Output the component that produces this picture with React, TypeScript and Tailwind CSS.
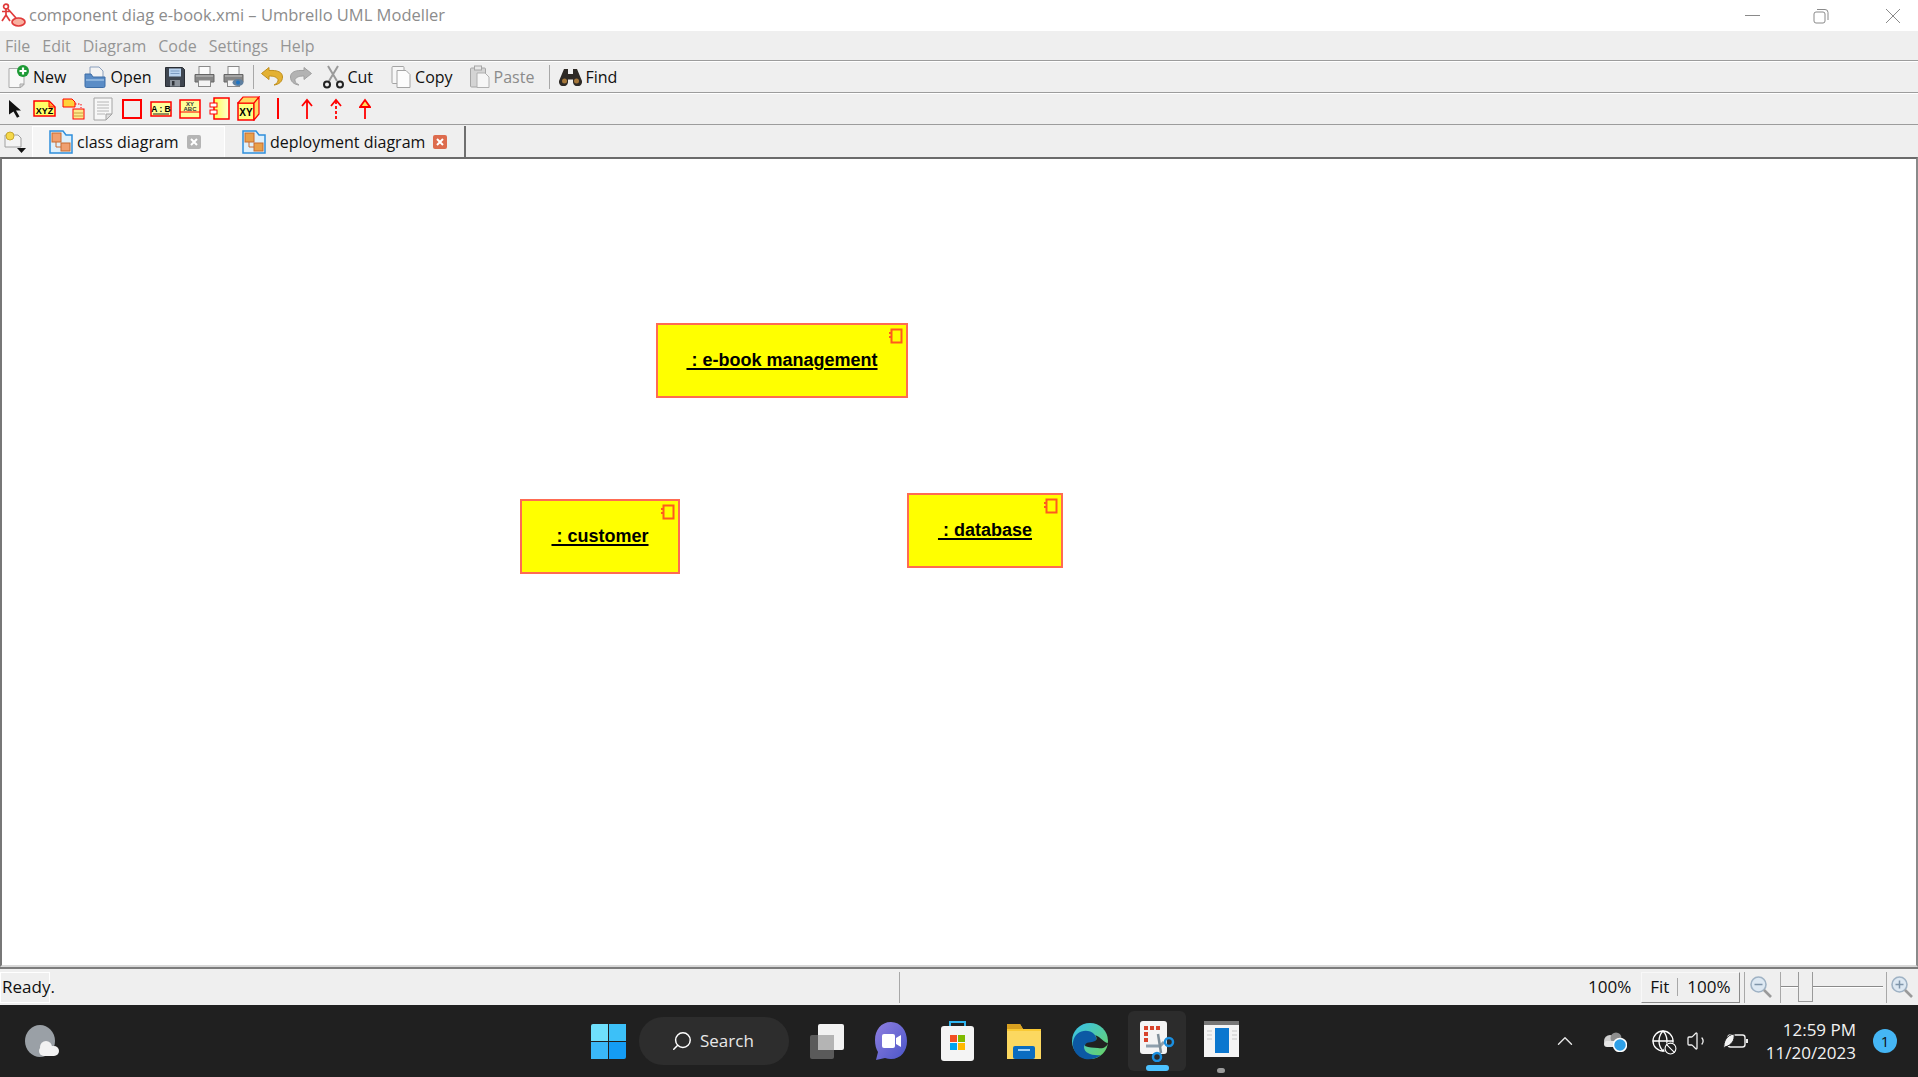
import React from 'react';
import { Search, ChevronUp, Volume1, Globe, Ban } from 'lucide-react';

const UmlBox = ({ name, className }: { name: string; className: string }) => (
  <div className={`absolute flex items-center justify-center bg-[#ffff00] border-2 border-[#ff6b52] ${className}`}>
    <span className="whitespace-pre font-['Liberation_Sans',sans-serif] font-bold text-[18px] leading-[20px] text-black underline underline-offset-2 decoration-2 mt-[-1px]">{` : ${name}`}</span>
    {/* little component marker */}
    <svg className="absolute top-[3px] right-[3px]" width="15" height="16" viewBox="0 0 15 16" fill="none" stroke="#ff5a1e" strokeWidth="2">
      <rect x="3.5" y="1.5" width="10" height="13" />
      <path d="M1 5h3M1 9h3" />
    </svg>
  </div>
);

const PageIcon = ({ plus }: { plus?: boolean }) => (
  <svg width="24" height="24" viewBox="0 0 24 24">
    <path d="M3 3.5h12l3 3v13l-3 3H3z" fill="#f8f8f8" stroke="#a9a9a9" />
    <path d="M18 19l-4 0 0 3.5z" fill="#ddd" stroke="#a9a9a9" />
    {plus && <circle cx="17" cy="6" r="6" fill="#1d9a35" />}
    {plus && <path d="M17 2.5v7M13.5 6h7" stroke="#fff" strokeWidth="2.2" />}
  </svg>
);

const OpenIcon = () => (
  <svg width="24" height="24" viewBox="0 0 24 24">
    <path d="M7 2h9l4 4v8H7z" fill="#f3f3f3" stroke="#8a9fbd" />
    <path d="M2 9h6l2 3h12v9a1.5 1.5 0 0 1-1.5 1.5h-17A1.5 1.5 0 0 1 2 21z" fill="#5a8cc6" stroke="#3d6da6" />
    <path d="M3 14h18v2H3z" fill="#8bb3dd" />
  </svg>
);

const SaveIcon = () => (
  <svg width="22" height="22" viewBox="0 0 22 22">
    <path d="M1.5 1.5h17l2 2v17h-19z" fill="#3f4650" stroke="#2a2e34" />
    <rect x="5" y="2.5" width="12" height="8" fill="#b9d2ee" />
    <path d="M6.5 5h9M6.5 7.5h9" stroke="#7d9cc2" />
    <rect x="6" y="14" width="10" height="6.5" fill="#8c939b" />
    <rect x="8" y="15" width="2.5" height="4.5" fill="#2f3338" />
  </svg>
);

const PrintIcon = ({ preview }: { preview?: boolean }) => (
  <svg width="23" height="23" viewBox="0 0 23 23">
    <rect x="6" y="1.5" width="11" height="8" fill="#fbfbfb" stroke="#8a8a8a" />
    <path d="M2 9.5h19v7.5H2z" fill="#868686" stroke="#666" />
    <path d="M3 11h17" stroke="#c6c6c6" />
    <rect x="5.5" y="15" width="12" height="6.5" fill="#f4f4f4" stroke="#8a8a8a" />
    {preview && <ellipse cx="16" cy="17.5" rx="5.5" ry="3.5" fill="#5f7f9f" />}
    {preview && <circle cx="16" cy="17.5" r="2" fill="#1f75c4" />}
  </svg>
);

const CurveArrow = ({ gold }: { gold?: boolean }) => (
  <svg width="24" height="22" viewBox="0 0 24 22">
    <path
      d="M9 1.5L1.5 7.5 9 13.5V10c5 0 7.5 1 9 3.5 .5 2-1 4-4 5.5 5-.5 8.5-3.5 8.5-8 0-5-5-7-13.5-6.5z"
      fill={gold ? '#e3b133' : '#b3b3b3'}
      stroke={gold ? '#c08f1d' : '#a0a0a0'}
    />
  </svg>
);

const ScissorsIcon = () => (
  <svg width="22" height="24" viewBox="0 0 22 24" fill="none">
    <path d="M6 1l9 15M16 1L7 16" stroke="#9a9a9a" strokeWidth="2" />
    <circle cx="5" cy="19.5" r="3" stroke="#222" strokeWidth="2" />
    <circle cx="18" cy="19.5" r="3" stroke="#222" strokeWidth="2" />
  </svg>
);

const CopyIcon = () => (
  <svg width="22" height="24" viewBox="0 0 22 24">
    <rect x="2" y="1.5" width="12" height="17" rx="1" fill="#f7f7f7" stroke="#a4a4a4" />
    <path d="M7 5.5h9l4 4v13H7z" fill="#fcfcfc" stroke="#a4a4a4" />
  </svg>
);

const PasteIcon = () => (
  <svg width="22" height="24" viewBox="0 0 22 24">
    <rect x="1.5" y="3" width="15" height="19" rx="1" fill="#d4d4d4" stroke="#a6a6a6" />
    <rect x="5.5" y="1" width="7" height="4" fill="#e8e8e8" stroke="#a6a6a6" />
    <path d="M8 8h8l4 4v10.5H8z" fill="#f6f6f6" stroke="#b0b0b0" />
  </svg>
);

const BinocularsIcon = () => (
  <svg width="23" height="18" viewBox="0 0 23 18">
    <path d="M5 1h4v5h5V1h4l5 12a4.5 4.5 0 0 1-9 1.5v-3h-5v3a4.5 4.5 0 0 1-9-1.5z" fill="#2e2a26" />
    <circle cx="5.5" cy="13" r="2.5" fill="#a5773a" />
    <circle cx="17.5" cy="13" r="2.5" fill="#a5773a" />
  </svg>
);

const Sep = ({ className }: { className: string }) => <div className={`w-px h-[24px] bg-[#a8a8a8] ${className}`} />;

const ToolBtn = ({ icon, label, gray, className }: { icon: React.ReactNode; label: string; gray?: boolean; className: string }) => (
  <div className={`flex items-center ${className}`}>
    {icon}
    <span className={`text-[16px] ml-[3px] ${gray ? 'text-[#8b8b8b]' : 'text-[#101010]'}`}>{label}</span>
  </div>
);

const NoteCorner = ({ text }: { text: string }) => (
  <svg width="23" height="17" viewBox="0 0 23 17">
    <path d="M1 1h15l6 6v9H1z" fill="#ffff66" stroke="#f00" strokeWidth="1.5" />
    <path d="M16 1l6 6h-6z" fill="#ffa030" stroke="#f00" />
    <text x="11.5" y="14" textAnchor="middle" fontFamily="Liberation Sans" fontWeight="bold" fontSize="9" fill="#000">{text}</text>
  </svg>
);

const ModeIcons = () => (
  <div className="flex items-center h-[31px]">
    <svg className="ml-[8px]" width="15" height="19" viewBox="0 0 15 19">
      <path d="M1 1l12 10.5H8l3.5 6-2.5 1.3-3.5-6.3L1 15.5z" fill="#111" />
    </svg>
    <div className="ml-[10px]"><NoteCorner text="XYZ" /></div>
    <svg className="ml-[6px]" width="23" height="22" viewBox="0 0 23 22">
      <path d="M1 1h9l3 3v5H1z" fill="#ffd23a" stroke="#f00" />
      <path d="M13 6h6v4" fill="none" stroke="#f00" strokeDasharray="1.5 1.5" />
      <rect x="11" y="11" width="11" height="10" fill="#ffe98a" stroke="#f00" />
      <path d="M12 15h9M12 18h9" stroke="#c8a040" />
    </svg>
    <svg className="ml-[8px]" width="20" height="24" viewBox="0 0 20 24">
      <path d="M1 1h18v16l-6 6H1z" fill="#f7f7f7" stroke="#a4a4a4" />
      <path d="M4 5h12M4 8h12M4 11h12M4 14h12M4 17h8" stroke="#b6b6b6" />
      <path d="M19 17h-6v6z" fill="#ddd" stroke="#a4a4a4" />
    </svg>
    <div className="ml-[9px] w-[20px] h-[20px] border-2 border-[#f00]" />
    <svg className="ml-[8px]" width="22" height="16" viewBox="0 0 22 16">
      <rect x="1" y="1" width="20" height="14" fill="#ffff99" stroke="#f00" strokeWidth="1.5" />
      <text x="11" y="11" textAnchor="middle" fontFamily="Liberation Sans" fontWeight="bold" fontSize="8.5" fill="#000">A : B</text>
      <path d="M3 13h16" stroke="#222" />
    </svg>
    <svg className="ml-[7px]" width="22" height="20" viewBox="0 0 22 20">
      <rect x="1" y="1" width="20" height="18" fill="#ffff99" stroke="#f00" strokeWidth="1.5" />
      <path d="M1 13h20" stroke="#f00" />
      <text x="11" y="7" textAnchor="middle" fontFamily="Liberation Sans" fontWeight="bold" fontSize="6" fill="#333">XY</text>
      <text x="11" y="12" textAnchor="middle" fontFamily="Liberation Sans" fontWeight="bold" fontSize="6" fill="#333">ABC</text>
    </svg>
    <svg className="ml-[8px]" width="21" height="23" viewBox="0 0 21 23">
      <defs>
        <linearGradient id="compFill" x1="0" x2="1" y1="0" y2="0">
          <stop offset="0" stopColor="#ffff55" />
          <stop offset="1" stopColor="#ffffd0" />
        </linearGradient>
      </defs>
      <rect x="5" y="1" width="15" height="21" fill="url(#compFill)" stroke="#f00" strokeWidth="1.5" />
      <rect x="1" y="6" width="7" height="4" fill="#fff" stroke="#f00" />
      <rect x="1" y="13" width="7" height="4" fill="#fff" stroke="#f00" />
    </svg>
    <svg className="ml-[7px]" width="23" height="25" viewBox="0 0 23 25">
      <path d="M1 7h16v17H1z" fill="#ffff80" stroke="#f00" strokeWidth="1.5" />
      <path d="M1 7l5-6h16l-5 6zM17 7l5-6v17l-5 6z" fill="#ffd860" stroke="#f00" strokeWidth="1.2" />
      <text x="9" y="20" textAnchor="middle" fontFamily="Liberation Sans" fontWeight="bold" fontSize="10" fill="#000">XY</text>
    </svg>
    <div className="ml-[17px] w-[2px] h-[21px] bg-[#f00]" />
    <svg className="ml-[22px]" width="12" height="22" viewBox="0 0 12 22" fill="none" stroke="#f00" strokeWidth="1.8">
      <path d="M6 21V2M1 8l5-6 5 6" />
    </svg>
    <svg className="ml-[17px]" width="12" height="22" viewBox="0 0 12 22" fill="none" stroke="#f00" strokeWidth="1.8">
      <path d="M6 21V2" strokeDasharray="3 2" />
      <path d="M1 8l5-6 5 6" />
    </svg>
    <svg className="ml-[17px]" width="12" height="22" viewBox="0 0 12 22" fill="none" stroke="#f00" strokeWidth="1.8">
      <path d="M6 21V9" />
      <path d="M1 9l5-7 5 7z" fill="#ffe060" />
    </svg>
  </div>
);

const DiagramIcon = ({ deployment }: { deployment?: boolean }) => (
  <svg width="24" height="24" viewBox="0 0 24 24">
    <path d="M1 1h13l3 4h6v18H1z" fill="#dff0fb" stroke="#2f8fdc" strokeWidth="1.5" />
    <rect x="3" y="3" width="9" height="9" fill={deployment ? '#e8a04a' : '#f0a070'} stroke="#c76b30" />
    <rect x="12" y="13" width="9" height="8" fill={deployment ? '#e8a04a' : '#f0a070'} stroke="#c76b30" />
    <path d="M7 12v5h5" fill="none" stroke="#c76b30" />
  </svg>
);

const CloseTab = ({ active }: { active?: boolean }) => (
  <div className={`w-[14px] h-[14px] rounded-[2px] flex items-center justify-center ${active ? 'bg-[#dd6b4d]' : 'bg-[#b5b5b5]'}`}>
    <svg width="8" height="8" viewBox="0 0 8 8" stroke="#fff" strokeWidth="2"><path d="M1 1l6 6M7 1L1 7" /></svg>
  </div>
);

const ZoomIcon = ({ plus }: { plus?: boolean }) => (
  <svg width="24" height="24" viewBox="0 0 24 24" fill="none">
    <circle cx="9.5" cy="9.5" r="7.5" fill="#dde8f2" stroke="#9fb2c4" strokeWidth="1.6" />
    <path d="M5.5 9.5h8" stroke="#7f95aa" strokeWidth="1.5" />
    {plus && <path d="M9.5 5.5v8" stroke="#7f95aa" strokeWidth="1.5" />}
    <path d="M15 15l7 7" stroke="#9a9a9a" strokeWidth="2.6" />
  </svg>
);

const TaskbarIcons = () => (
  <div className="flex items-center">
    {/* start */}
    <div className="ml-[591px] grid grid-cols-2 gap-[1px] w-[35px] h-[35px]">
      <div className="bg-[#6fe0fc] rounded-tl-[2px]" />
      <div className="bg-[#3cc0f8]" />
      <div className="bg-[#3ab8f8]" />
      <div className="bg-[#149cf5] rounded-br-[2px]" />
    </div>
    {/* search */}
    <div className="ml-[13px] w-[150px] h-[48px] rounded-full bg-[#2d2d2d] flex items-center pl-[32px]">
      <Search className="w-[22px] h-[22px] text-white -scale-x-100" strokeWidth={1.6} />
      <span className="ml-[7px] text-[17px] text-[#e8e8e8]">Search</span>
    </div>
    {/* task view */}
    <svg className="ml-[20px]" width="36" height="36" viewBox="0 0 36 36">
      <rect x="1" y="12" width="24" height="24" rx="2" fill="#5a5a5a" />
      <rect x="9" y="1" width="26" height="26" rx="2" fill="#f2f2f2" />
      <rect x="9" y="12" width="16" height="15" fill="#b4b4b4" />
    </svg>
    {/* chat */}
    <svg className="ml-[29px]" width="34" height="40" viewBox="0 0 34 40">
      <defs>
        <linearGradient id="chatFill" x1="0" x2="1" y1="0" y2="1">
          <stop offset="0" stopColor="#8f7fe0" />
          <stop offset="1" stopColor="#4a55c8" />
        </linearGradient>
      </defs>
      <path d="M17 1C7 1 1 9 1 19c0 5 1 9 3 12l-2 8 9-2c2 .7 4 1 6 1 10 0 16-8 16-18S27 1 17 1z" fill="url(#chatFill)" />
      <rect x="8" y="13" width="13" height="14" rx="2" fill="#fff" />
      <path d="M22 17l5-3v12l-5-3z" fill="#fff" />
    </svg>
    {/* store */}
    <svg className="ml-[32px]" width="35" height="42" viewBox="0 0 35 42">
      <path d="M10 7V2h15v5" fill="none" stroke="#2fb5f0" strokeWidth="2" />
      <rect x="1" y="6" width="33" height="35" rx="3" fill="#f4f4f4" />
      <rect x="10" y="15" width="7" height="7" fill="#f25022" />
      <rect x="18" y="15" width="7" height="7" fill="#7fba00" />
      <rect x="10" y="23" width="7" height="7" fill="#00a4ef" />
      <rect x="18" y="23" width="7" height="7" fill="#ffb900" />
    </svg>
    {/* explorer */}
    <svg className="ml-[31px]" width="36" height="38" viewBox="0 0 36 38">
      <path d="M1 2h13l3 5h18v30H1z" fill="#f9c935" />
      <path d="M1 2h13l3 5H1z" fill="#d8a020" />
      <path d="M1 9h34v28H1z" fill="#fcd860" />
      <rect x="7" y="24" width="22" height="13" rx="2" fill="#0a6cc0" />
      <rect x="12" y="27" width="12" height="2" fill="#9ed0f5" />
    </svg>
    {/* edge */}
    <svg className="ml-[30px]" width="36" height="38" viewBox="0 0 36 38">
      <defs>
        <linearGradient id="edgeFill" x1="0" x2="1" y1="0" y2="1">
          <stop offset="0" stopColor="#35c1f1" />
          <stop offset="1" stopColor="#6dd35c" />
        </linearGradient>
      </defs>
      <circle cx="18" cy="19" r="18" fill="url(#edgeFill)" />
      <path d="M1 20C3 8 16 6 22 12c3 3 3 7 0 9-4 2-10 0-10 4 0 6 8 9 17 8-5 4-11 5-16 4C5 35 0 28 1 20z" fill="#0c59a4" />
      <path d="M13 24c0-5 7-3 10-5 2-1 2-4 0-6 6 2 9 8 13 8-1 4-5 6-10 5-5-.5-9 0-13-2z" fill="#212121" />
    </svg>
    {/* snipping tool, active */}
    <div className="ml-[20px] relative w-[58px] h-[60px] rounded-[6px] bg-[#2c2c2c] flex items-center justify-center">
      <svg width="36" height="42" viewBox="0 0 36 42">
        <rect x="1" y="1" width="27" height="33" rx="3" fill="#f4f4f4" />
        <rect x="5" y="6" width="4" height="4" fill="#d8432a" />
        <rect x="11" y="6" width="4" height="4" fill="#d8432a" />
        <rect x="17" y="6" width="4" height="4" fill="#d8432a" />
        <rect x="5" y="12" width="4" height="4" fill="#d8432a" />
        <rect x="5" y="18" width="4" height="4" fill="#d8432a" />
        <path d="M7 26h14l4-4" fill="none" stroke="#8ea0ad" strokeWidth="3" />
        <path d="M19 14l3 19" stroke="#7f8f99" strokeWidth="2.5" />
        <circle cx="30" cy="22" r="4" fill="none" stroke="#1a8fe0" strokeWidth="2.5" />
        <circle cx="18" cy="37" r="4" fill="none" stroke="#1a8fe0" strokeWidth="2.5" />
      </svg>
      <div className="absolute bottom-0 left-[18px] w-[23px] h-[6px] rounded-full bg-[#4cc2ff]" />
    </div>
    {/* mini window */}
    <div className="ml-[18px] relative w-[35px] h-[40px]">
      <svg width="35" height="36" viewBox="0 0 35 36">
        <rect width="35" height="36" fill="#f4f4f4" />
        <rect width="35" height="4" fill="#777" />
        <rect x="11" y="7" width="14" height="25" fill="#0b77cf" />
        <path d="M3 10h5M3 14h5M3 18h5M28 10h5M28 14h5M28 18h5" stroke="#c8c8c8" />
      </svg>
      <div className="absolute bottom-[-12px] left-[13px] w-[8px] h-[5px] rounded-full bg-[#9a9a9a]" />
    </div>
  </div>
);

const Tray = () => (
  <div className="ml-auto flex items-center text-white">
    <ChevronUp className="w-[26px] h-[26px] text-[#e6e6e6]" strokeWidth={1.3} />
    <svg className="ml-[23px]" width="26" height="22" viewBox="0 0 26 22">
      <circle cx="9" cy="11" r="6" fill="#cfcfcf" />
      <circle cx="15" cy="8" r="5.5" fill="#8e8e8e" />
      <rect x="3" y="11" width="15" height="6" rx="3" fill="#e6e6e6" />
      <circle cx="19" cy="15" r="6.5" fill="#2e9fe6" stroke="#fff" strokeWidth="1.5" />
    </svg>
    <div className="relative ml-[24px] w-[24px] h-[24px]">
      <Globe className="w-[24px] h-[24px] text-white" strokeWidth={1.3} />
      <div className="absolute right-[-2px] bottom-[-2px] bg-[#202020] rounded-full">
        <Ban className="w-[13px] h-[13px] text-white" strokeWidth={2} />
      </div>
    </div>
    <Volume1 className="ml-[11px] w-[24px] h-[24px] text-[#f0f0f0]" strokeWidth={1.3} />
    <svg className="ml-[13px]" width="26" height="20" viewBox="0 0 26 20" fill="none">
      <rect x="5" y="4" width="17" height="12" rx="2.5" stroke="#f0f0f0" strokeWidth="1.4" />
      <path d="M23 8h2v4h-2" fill="#f0f0f0" />
      <path d="M1 18C0 10 4 4 11 3c1 6-2 11-9 13z" fill="#f4f4f4" stroke="#202020" />
    </svg>
    <div className="ml-[19px] flex flex-col items-end text-[17px] leading-[23px] text-[#f2f2f2] w-[88px]">
      <span>12:59 PM</span>
      <span>11/20/2023</span>
    </div>
    <div className="ml-[17px] mr-[21px] w-[24px] h-[24px] rounded-full bg-[#45b6f5] flex items-center justify-center text-[15px] text-[#101010]">1</div>
  </div>
);

export default function App() {
  return (
    <div className="w-[1918px] h-[1077px] overflow-hidden flex flex-col bg-[#efefef] font-['Open_Sans','Noto_Sans',sans-serif]">
      {/* title bar */}
      <div className="h-[31px] bg-white flex items-center shrink-0">
        <svg className="ml-[1px]" width="25" height="25" viewBox="0 0 25 25" fill="none" stroke="#e03a3a" strokeWidth="1.7">
          <circle cx="5" cy="3.5" r="2.4" />
          <path d="M5 6v6M1 8.5h8M5 12l-4 6M5 12l4 6M7 6l8 9" />
          <ellipse cx="17.5" cy="19" rx="6.5" ry="4" fill="#f8b0a0" />
        </svg>
        <span className="ml-[3px] text-[16.5px] text-[#8c8c8c]">component diag e-book.xmi – Umbrello UML Modeller</span>
        <div className="ml-auto flex items-center text-[#8a8a8a]">
          <div className="w-[15px] h-px bg-[#8a8a8a]" />
          <svg className="ml-[53px]" width="16" height="16" viewBox="0 0 16 16" fill="none" stroke="#8a8a8a">
            <rect x="1" y="4" width="11" height="11" rx="2" />
            <path d="M4 1.5h8a3 3 0 0 1 3 3V12" />
          </svg>
          <svg className="ml-[56px] mr-[17px]" width="16" height="16" viewBox="0 0 16 16" stroke="#8a8a8a">
            <path d="M1 1l14 14M15 1L1 15" />
          </svg>
        </div>
      </div>

      {/* menu bar */}
      <div className="h-[29px] shrink-0 flex items-center gap-[12px] pl-[5px] text-[16px] text-[#959595]">
        <span>File</span>
        <span>Edit</span>
        <span>Diagram</span>
        <span>Code</span>
        <span>Settings</span>
        <span>Help</span>
      </div>

      {/* main toolbar */}
      <div className="h-[32px] shrink-0 flex items-center border-t border-[#9c9c9c] shadow-[inset_0_1px_0_#ffffff]">
        <ToolBtn className="ml-[6px]" icon={<PageIcon plus />} label="New" />
        <ToolBtn className="ml-[17px]" icon={<OpenIcon />} label="Open" />
        <div className="ml-[13px]"><SaveIcon /></div>
        <div className="ml-[7px]"><PrintIcon /></div>
        <div className="ml-[6px]"><PrintIcon preview /></div>
        <Sep className="ml-[8px]" />
        <div className="ml-[6px]"><CurveArrow gold /></div>
        <div className="ml-[5px] -scale-x-100"><CurveArrow /></div>
        <ToolBtn className="ml-[9px]" icon={<ScissorsIcon />} label="Cut" />
        <ToolBtn className="ml-[17px]" icon={<CopyIcon />} label="Copy" />
        <ToolBtn className="ml-[16px]" icon={<PasteIcon />} label="Paste" gray />
        <Sep className="ml-[15px]" />
        <ToolBtn className="ml-[9px]" icon={<BinocularsIcon />} label="Find" />
      </div>

      {/* uml tools */}
      <div className="h-[32px] shrink-0 border-t border-[#9c9c9c] shadow-[inset_0_1px_0_#ffffff]">
        <ModeIcons />
      </div>

      {/* tabs */}
      <div className="h-[33px] shrink-0 flex items-end border-t border-[#9c9c9c]">
        <svg className="ml-[4px] mb-[3px]" width="24" height="24" viewBox="0 0 24 24">
          <path d="M1 5h13l3 3v9H1z" fill="#f4f4f4" stroke="#a0a0a0" />
          <circle cx="6" cy="6" r="4" fill="#f5d84a" stroke="#c8a830" />
          <path d="M13 18h9l-4.5 5z" fill="#111" />
        </svg>
        <div className="ml-[4px] w-[193px] h-[31px] bg-[#f6f6f6] flex items-center pl-[16px] border-t border-x border-[#ffffff]">
          <DiagramIcon />
          <span className="ml-[4px] text-[16px] text-[#111]">class diagram</span>
          <div className="ml-[8px]"><CloseTab /></div>
        </div>
        <div className="w-[241px] h-[31px] flex items-center pl-[17px] border-r-2 border-[#6f6f6f]">
          <DiagramIcon deployment />
          <span className="ml-[4px] text-[16px] text-[#111]">deployment diagram</span>
          <div className="ml-[8px]"><CloseTab active /></div>
        </div>
      </div>

      {/* diagram canvas */}
      <div className="relative h-[810px] shrink-0 bg-white border-t-2 border-l-2 border-r-2 border-b-2 border-t-[#6b6b6b] border-l-[#777777] border-r-[#8a8a8a] border-b-[#d8d8d8]">
        <UmlBox name="e-book management" className="left-[654px] top-[164px] w-[252px] h-[75px]" />
        <UmlBox name="customer" className="left-[518px] top-[340px] w-[160px] h-[75px]" />
        <UmlBox name="database" className="left-[905px] top-[334px] w-[156px] h-[75px]" />
      </div>

      {/* status bar */}
      <div className="h-[38px] shrink-0 flex items-center border-t-2 border-[#7c7c7c] text-[17px] text-[#111]">
        <div className="w-[50px] h-[31px] flex items-center pl-[1px] border border-white">Ready.</div>
        <div className="ml-[849px] h-[31px] w-px bg-[#a8a8a8]" />
        <span className="ml-[688px]">100%</span>
        <div className="ml-[10px] w-[99px] h-[31px] flex items-center border border-[#f8f8f8] border-b-[#8a8a8a] border-r-[#8a8a8a]">
          <span className="ml-[8px]">Fit</span>
          <div className="ml-[8px] w-px h-[18px] bg-[#a8a8a8]" />
          <span className="ml-[9px]">100%</span>
        </div>
        <div className="ml-[4px] w-[33px] h-[31px] flex items-center justify-center border-l border-[#a8a8a8]"><ZoomIcon /></div>
        <div className="ml-[3px] relative w-[103px] h-[31px] flex items-center border-l border-[#a8a8a8]">
          <div className="w-full h-[2px] bg-[#8a8a8a] border-b border-white" />
          <div className="absolute left-[17px] top-0 w-[15px] h-[30px] bg-[#efefef] border-x border-b border-[#9a9a9a]" />
        </div>
        <div className="ml-[3px] flex-1 h-[31px] flex items-center border-l border-[#a8a8a8] pl-[3px]"><ZoomIcon plus /></div>
      </div>

      {/* windows taskbar */}
      <div className="flex-1 bg-[#202020] flex items-center">
        <svg className="absolute left-[24px] top-[1024px]" width="36" height="36" viewBox="0 0 36 36">
          <ellipse cx="16" cy="17" rx="15" ry="16" fill="#9aa0a6" />
          <circle cx="22" cy="23" r="6" fill="#f2f2f2" />
          <rect x="15" y="22" width="20" height="10" rx="5" fill="#f2f2f2" />
        </svg>
        <TaskbarIcons />
        <Tray />
      </div>
    </div>
  );
}
